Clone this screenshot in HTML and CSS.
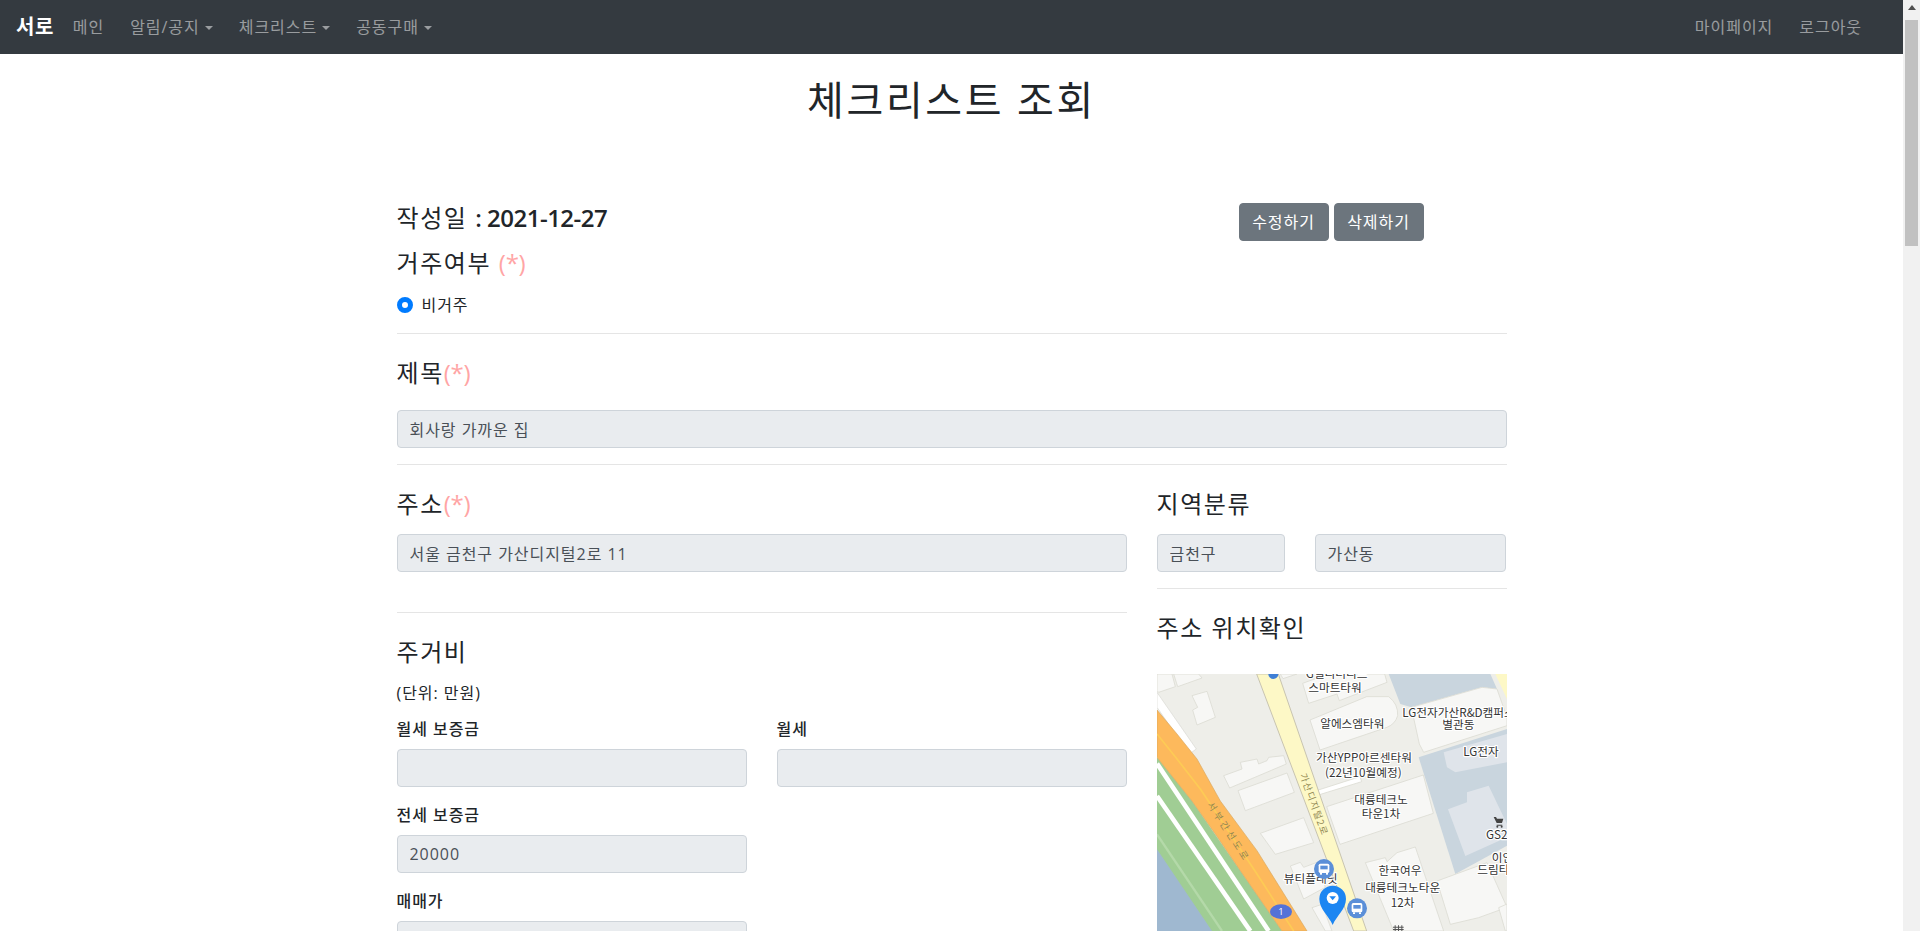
FILE: index.html
```html
<!DOCTYPE html>
<html lang="ko">
<head>
<meta charset="utf-8">
<title>체크리스트 조회</title>
<link rel="stylesheet" href="styles.css">
</head>
<body>
<div class="page">
  <nav class="navbar">
    <a class="brand" href="#">서로</a>
    <a class="nav-link" href="#">메인</a>
    <a class="nav-link caret" href="#">알림/공지</a>
    <a class="nav-link caret" href="#">체크리스트</a>
    <a class="nav-link caret" href="#">공동구매</a>
    <span class="nav-spacer"></span>
    <a class="nav-link" href="#">마이페이지</a>
    <a class="nav-link" href="#">로그아웃</a>
  </nav>
  <h1 class="title">체크리스트 조회</h1>
  <main class="container">
    <div class="date-row">
      <h4 class="heading">작성일 <span class="date">: 2021-12-27</span></h4>
      <div class="actions">
        <button class="btn" type="button">수정하기</button>
        <button class="btn" type="button">삭제하기</button>
      </div>
    </div>
    <h4 class="heading residence">거주여부 <span class="req">(*)</span></h4>
    <label class="radio-row"><span class="radio"></span>비거주</label>
    <hr class="rule">
    <h4 class="heading subject">제목<span class="req">(*)</span></h4>
    <input class="field subject-input" disabled value="회사랑 가까운 집">
    <hr class="rule">
    <div class="columns">
      <section class="col-left">
        <h4 class="heading addr">주소<span class="req">(*)</span></h4>
        <input class="field" disabled value="서울 금천구 가산디지털2로 11">
        <hr class="rule left-rule">
        <h4 class="heading cost">주거비</h4>
        <p class="unit">(단위: 만원)</p>
        <div class="cost-grid">
          <div class="cost-item"><label class="cost-label">월세 보증금</label><input class="field" disabled></div>
          <div class="cost-item"><label class="cost-label">월세</label><input class="field" disabled></div>
          <div class="cost-item cost-new"><label class="cost-label">전세 보증금</label><input class="field" disabled value="20000"></div>
          <div class="cost-item cost-new"><label class="cost-label">매매가</label><input class="field" disabled></div>
        </div>
      </section>
      <section class="col-right">
        <h4 class="heading addr">지역분류</h4>
        <div class="region">
          <input class="field gu" disabled value="금천구">
          <input class="field dong" disabled value="가산동">
        </div>
        <hr class="rule">
        <h4 class="heading locate">주소 위치확인</h4>
        <div class="map">
          <svg class="map-svg" viewBox="0 0 1050 771" width="350" height="257" xmlns="http://www.w3.org/2000/svg">
            <rect width="1050" height="771" fill="#eeeee9"/>
            <!-- blue-grey blocks -->
            <polygon points="695,0 730,90 763,100 975,40 1020,45 1000,0" fill="#c9d5de"/>
            <polygon points="785,250 1050,165 1050,515 895,600" fill="#c9d5de"/>
            <polygon points="860,235 1050,180 1050,265 895,295 870,280" fill="#dfe4ea"/>
            <polygon points="873,406 930,385 930,355 995,335 1050,450 1050,490 925,546" fill="#dfe4ea"/>
            <polygon points="1015,0 1050,0 1050,75" fill="#fdf8c6"/>
            <!-- river, green, expressway -->
            <polygon points="0,250 105,381 375,771 0,771" fill="#a0cd94"/>
            <polygon points="0,526 165,771 0,771" fill="#9fb8d0"/>
            <line x1="0" y1="481" x2="195" y2="771" stroke="#b4d9a9" stroke-width="7"/>
            <line x1="0" y1="269" x2="335" y2="771" stroke="#fff" stroke-width="14"/>
            <line x1="0" y1="366" x2="280" y2="771" stroke="#fff" stroke-width="14"/>
            <polygon points="0,55 118,225 97,240 0,100" fill="#fff" stroke="#d8d8d2" stroke-width="2"/>
            <polygon points="0,108 60,180 120,255 190,381 300,530 450,771 375,771 250,590 175,480 105,381 0,250" fill="#fdb95c" stroke="#d9a75f" stroke-width="2"/>
            <polyline points="0,180 60,255 130,345 210,465 300,600 410,771" fill="none" stroke="#fdcb55" stroke-width="5"/>
            <!-- buildings -->
            <g fill="#f7f7f5" stroke="#dcdcd4" stroke-width="2.5">
              <polygon points="0,0 45,0 55,38 5,55 0,50"/>
              <polygon points="50,0 125,0 135,12 62,38"/>
              <polygon points="105,65 150,52 175,130 120,153 107,108 122,100"/>
              <polygon points="200,305 255,285 250,265 300,255 305,270 330,260 335,250 380,245 388,270 218,342"/>
              <polygon points="243,350 390,297 412,355 265,410"/>
              <polygon points="310,478 440,431 470,506 355,541"/>
              <polygon points="400,576 430,565 440,580 480,565 505,640 440,675"/>
              <polygon points="465,701 495,691 525,771 505,771"/>
              <polygon points="370,0 420,0 378,14"/>
              <polygon points="437,28 500,5 500,0 683,0 690,25 547,80 540,60 455,88"/>
              <path d="M459,138 L629,68 L695,68 Q724,90 722,125 Q715,150 690,160 L489,228 Z"/>
              <polygon points="763,100 975,40 1020,45 1050,130 1050,155 800,235 787,210"/>
              <polygon points="484,348 609,308 614,323 484,363" fill="#fff"/>
              <polygon points="509,398 799,303 829,418 549,511"/>
              <polygon points="625,566 685,551 690,563 720,536 775,519 860,771 710,771"/>
              <polygon points="840,621 990,566 1050,700 965,731 880,751"/>
              <polygon points="1025,701 1050,690 1050,771 1045,771"/>
            </g>
            <polygon points="299,0 364,0 629,771 590,771" fill="#fdf8c6" stroke="#c8c4b0" stroke-width="3"/>
            <circle cx="349" cy="0" r="15" fill="#3f7fd6"/>
            <!-- road names -->
            <text class="road-name street" transform="translate(428,302) rotate(70)">가산디지털2로</text>
            <text class="road-name" transform="translate(150,392) rotate(57)">서부간선도로</text>
            <!-- labels -->
            <g class="labels">
              <text x="539" y="13">G밸리더리드</text>
              <text x="534" y="55">스마트타워</text>
              <text x="586" y="161">알에스엠타워</text>
              <text x="736" y="128" class="start">LG전자가산R&amp;D캠퍼스</text>
              <text x="904" y="165">별관동</text>
              <text x="972" y="246">LG전자</text>
              <text x="621" y="265">가산YPP아르센타워</text>
              <text x="619" y="310">(22년10월예정)</text>
              <text x="672" y="391">대륭테크노</text>
              <text x="672" y="431">타운1차</text>
              <text x="729" y="602">한국여우</text>
              <text x="737" y="655">대륭테크노타운</text>
              <text x="737" y="698">12차</text>
              <text x="461" y="628">뷰티플래닛</text>
              <text x="987" y="495" class="start">GS25</text>
              <text x="1004" y="563" class="start">이안</text>
              <text x="961" y="601" class="start">드림타워</text>
            </g>
            <!-- cart -->
            <path d="M1010,429 h7 l3,5 h19 l-4,13 h-16 z M1019,452 h17 v3 h-17 z" fill="#444"/>
            <circle cx="1021" cy="458" r="3" fill="#444"/><circle cx="1034" cy="458" r="3" fill="#444"/>
            <!-- place mark at bottom -->
            <path d="M708,758 h32 v3 h-32 z M708,765 h32 v3 h-32 z M713,754 h3 v17 h-3 z M723,754 h3 v17 h-3 z M733,754 h3 v17 h-3 z" fill="#555"/>
            <!-- bus stops -->
            <g>
              <circle cx="501" cy="585" r="30" fill="#5b8fd8"/>
              <rect x="485" y="569" width="32" height="28" rx="5" fill="#fff"/>
              <rect x="490" y="575" width="22" height="11" fill="#5b8fd8"/>
              <rect x="489" y="597" width="6" height="5" fill="#fff"/><rect x="507" y="597" width="6" height="5" fill="#fff"/>
            </g>
            <g>
              <circle cx="600" cy="703" r="30" fill="#5b8fd8"/>
              <rect x="584" y="687" width="32" height="28" rx="5" fill="#fff"/>
              <rect x="589" y="693" width="22" height="11" fill="#5b8fd8"/>
              <rect x="588" y="715" width="6" height="5" fill="#fff"/><rect x="606" y="715" width="6" height="5" fill="#fff"/>
            </g>
            <!-- road shield -->
            <ellipse cx="372" cy="713" rx="33" ry="22" fill="#5472d8"/>
            <text class="shield" x="372" y="723">1</text>
            <!-- marker -->
            <path d="M527,753 C515,725 487,705 487,675 A40,40 0 0 1 567,675 C567,705 539,725 527,753 Z" fill="#1c86f2"/>
            <circle cx="527" cy="672" r="18" fill="#fff"/>
            <polygon points="517,667 537,667 527,679" fill="#1c86f2"/>
          </svg>
        </div>
      </section>
    </div>
  </main>
</div>
<aside class="scrollbar">
  <div class="scroll-up"><span class="scroll-arrow"></span></div>
  <div class="scroll-thumb"></div>
</aside>
</body>
</html>
```
FILE: styles.css
```css
* { box-sizing: border-box; }
html, body { margin: 0; height: 100%; overflow: hidden; }
body {
  display: flex;
  background: #fff;
  color: #212529;
  font-family: "Open Sans", "Noto Sans CJK KR", sans-serif;
  font-size: 16px;
  line-height: 24px;
  letter-spacing: .06em;
}
.page { flex: 1; min-width: 0; height: 100vh; overflow: hidden; }

/* navbar */
.navbar {
  display: flex;
  align-items: center;
  gap: 26px;
  height: 54px;
  padding: 0 41px 0 16px;
  background: #343a40;
}
.brand { color: #fff; font-size: 20px; font-weight: 700; text-decoration: none; margin-right: -7px; letter-spacing: .5px; }
.nav-link { color: rgba(255,255,255,.5); text-decoration: none; }
.caret::after {
  content: "";
  display: inline-block;
  margin-left: 5px;
  vertical-align: 3px;
  border-top: 4.8px solid;
  border-left: 4.8px solid transparent;
  border-right: 4.8px solid transparent;
}
.nav-spacer { flex: 1; }

/* titles */
.title {
  margin: 22px 0 0;
  text-align: center;
  font-size: 40px;
  line-height: 48px;
  font-weight: 400;
  letter-spacing: .065em;
}
.container { width: 1110px; margin: 79px auto 0; }
.heading { margin: 0; font-size: 24px; line-height: 29px; font-weight: 400; letter-spacing: .065em; }
.date { font-weight: 600; letter-spacing: -.5px; }
.req { color: #ffa5a5; font-weight: 500; letter-spacing: -.3px; }

.date-row { display: flex; justify-content: space-between; align-items: flex-start; }
.actions { display: flex; gap: 5px; margin-right: 83px; }
.btn {
  width: 90px;
  height: 38px;
  padding: 0;
  border: 1px solid #6c757d;
  border-radius: 4px;
  background: #6c757d;
  color: #fff;
  font: inherit;
  letter-spacing: .06em;
}
.residence { margin-top: 7px; }
.radio-row { display: flex; align-items: center; gap: 9px; margin-top: 16px; }
.radio { width: 16px; height: 16px; border-radius: 50%; border: 5px solid #007bff; background: #fff; }
.rule { margin: 16px 0 0; border: 0; border-top: 1px solid rgba(0,0,0,.1); }
.subject { margin-top: 24px; }
.subject-input { margin-top: 23px; }

.field {
  display: block;
  width: 100%;
  height: 38px;
  padding: 6px 12px;
  border: 1px solid #ced4da;
  border-radius: 4px;
  background: #e9ecef;
  color: #495057;
  font: inherit;
  letter-spacing: .06em;
}

.columns { display: grid; grid-template-columns: 730px 350px; gap: 30px; }
.addr { margin-top: 24px; }
.addr + .field, .addr + .region { margin-top: 16px; }
.left-rule { margin-top: 40px; }
.cost { margin-top: 24px; }
.unit { margin: 15px 0 0; }
.cost-grid { display: grid; grid-template-columns: 350px 350px; column-gap: 30px; }
.cost-item { margin-top: 12px; }
.cost-new { margin-top: 16px; grid-column: 1; }
.cost-label { display: block; font-weight: 500; margin-bottom: 8px; }

.region { display: flex; gap: 30px; }
.gu { width: 128px; }
.dong { width: 191px; }
.locate { margin-top: 24px; }
.map { margin-top: 32px; width: 350px; height: 400px; overflow: hidden; background: #eeeee9; }
.map-svg { display: block; }
.labels text {
  font-family: "Noto Sans CJK KR", sans-serif;
  font-size: 35px;
  letter-spacing: 0;
  text-anchor: middle;
  fill: #333;
  stroke: #fff;
  stroke-width: 7px;
  stroke-linejoin: round;
  paint-order: stroke;
}
.labels text.start { text-anchor: start; }
.road-name {
  font-family: "Noto Sans CJK KR", sans-serif;
  font-size: 28px;
  letter-spacing: 9px;
  fill: #8f8650;
}
.street { letter-spacing: 4px; }
.shield {
  font-family: "Open Sans", sans-serif;
  font-size: 28px;
  letter-spacing: 0;
  text-anchor: middle;
  fill: #fff;
}

/* window scrollbar */
.scrollbar { flex: none; width: 17px; height: 100vh; background: #f1f1f1; padding: 0 2px; }
.scroll-up { display: flex; justify-content: center; height: 20px; padding-top: 5px; }
.scroll-arrow {
  width: 0; height: 0;
  border-bottom: 5px solid #505050;
  border-left: 4px solid transparent;
  border-right: 4px solid transparent;
}
.scroll-thumb { height: 226px; background: #c1c1c1; }
```
